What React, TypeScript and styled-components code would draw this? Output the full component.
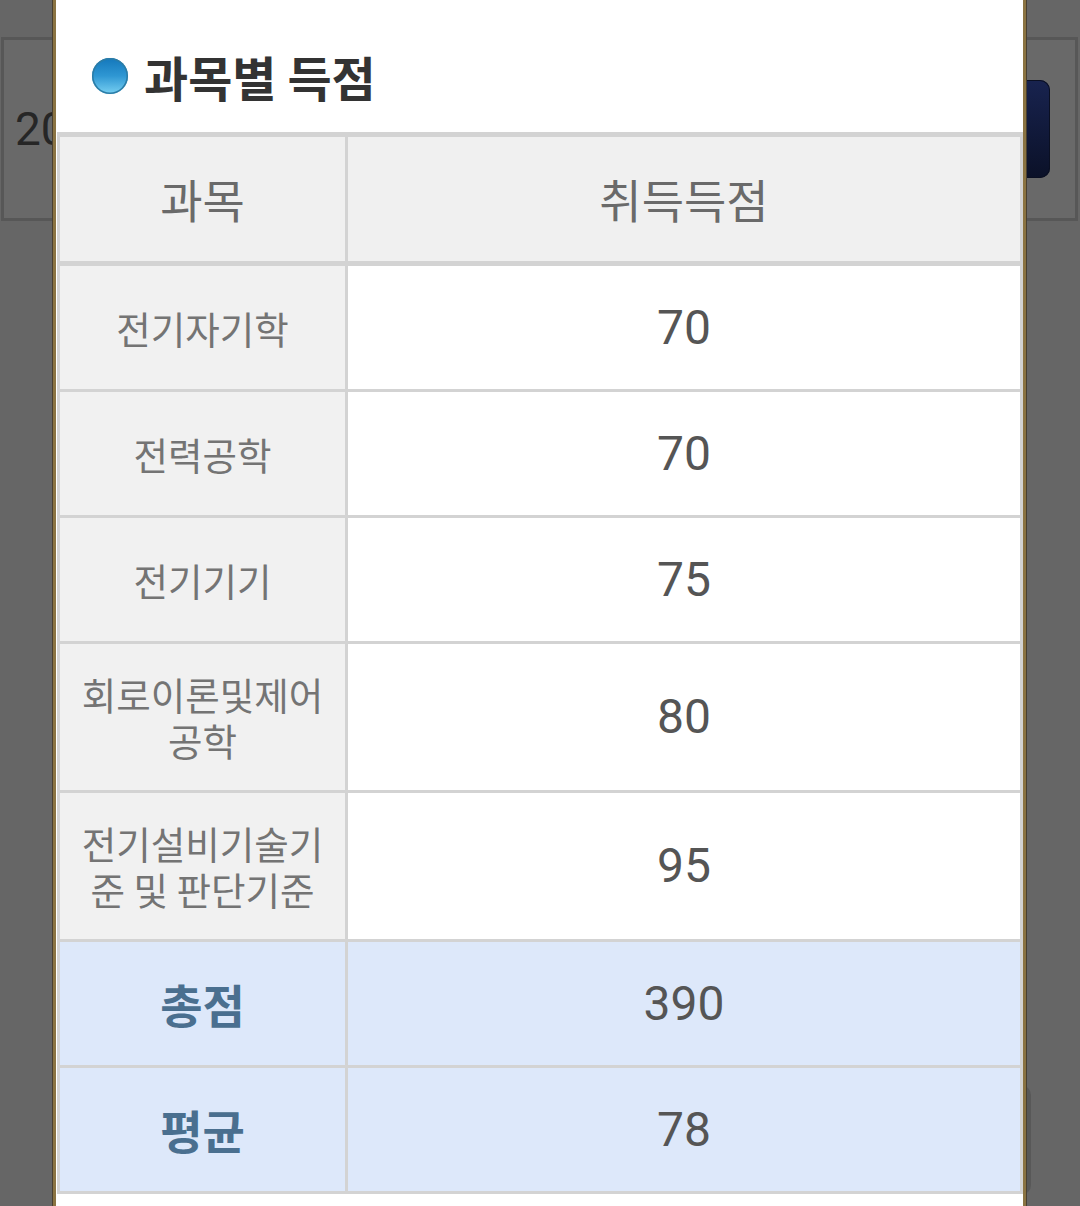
import React from "react";
import styled, { createGlobalStyle } from "styled-components";

const GlobalStyle = createGlobalStyle`
  html, body {
    margin: 0;
    padding: 0;
    background: #666666;
    overflow: hidden;
  }
  body {
    font-family: Roboto, "Noto Sans CJK KR", "Noto Sans", sans-serif;
  }
`;

const Page = styled.div`
  position: relative;
  width: 1080px;
  height: 1206px;
  background: #666666;
  padding-top: 37px;
  box-sizing: border-box;
  overflow: hidden;
`;

const RowBox = styled.div`
  box-sizing: border-box;
  height: 184px;
  margin: 0 2px 0 1px;
  border: 3px solid #575757;
  background: #696969;
  display: flex;
  align-items: center;
  justify-content: space-between;
  padding: 0 0 0 11px;
`;

const YearText = styled.span`
  font-family: Roboto, "Noto Sans CJK KR", sans-serif;
  font-size: 46px;
  color: #262626;
`;

const DarkButton = styled.div`
  width: 120px;
  height: 98px;
  margin-right: 25px;
  border-radius: 10px;
  background: linear-gradient(180deg, #18234f 0%, #0b1128 100%);
  box-shadow: inset 0 0 0 1px #0a0f22;
`;

const LowerArea = styled.div`
  display: flex;
  justify-content: flex-end;
  margin-top: 864px;
  padding-right: 49px;
`;

const GhostButton = styled.div`
  width: 100px;
  height: 110px;
  border-radius: 10px;
  background: #585858;
`;

const Modal = styled.section`
  position: absolute;
  top: -4px;
  left: 53px;
  width: 973px;
  height: 1260px;
  box-sizing: border-box;
  background: #ffffff;
  border-left: 3px solid #8a7342;
  border-right: 3px solid #8a7342;
  box-shadow: -1px 0 0 #4a4030, 1px 0 0 #4a4030;
`;

const TitleBar = styled.header`
  box-sizing: border-box;
  height: 136px;
  padding: 24px 0 0 36px;
  display: flex;
  align-items: center;
  gap: 16px;
`;

const Dot = styled.span`
  width: 36px;
  height: 36px;
  border-radius: 50%;
  background: linear-gradient(180deg, #1477bb 0%, #2f97d3 50%, #78d0f2 100%);
  box-shadow: inset 0 0 0 1.5px #2b7ca6, 0 0 1px rgba(0, 0, 0, 0.15);
  flex: none;
`;

const Title = styled.h2`
  margin: 0;
  font-family: "Noto Sans CJK KR", sans-serif;
  font-size: 48px;
  font-weight: 700;
  color: #333333;
  line-height: 1;
`;

const Grid = styled.div`
  margin-left: 1px;
  display: grid;
  grid-template-columns: 285px 1fr;
  gap: 3px;
  padding: 5px 3px 3px 3px;
  background: #d3d3d3;
`;

type Tone = "head" | "label" | "value" | "sumLabel" | "sumValue";

const bg: Record<Tone, string> = {
  head: "#f0f0f0",
  label: "#f1f1f1",
  value: "#ffffff",
  sumLabel: "#dde8fa",
  sumValue: "#dde8fa",
};

const Cell = styled.div<{ $tone: Tone }>`
  box-sizing: border-box;
  min-height: ${(p) => (p.$tone === "head" ? "124px" : "123px")};
  margin-bottom: ${(p) => (p.$tone === "head" ? "2px" : "0")};
  padding: 27px 8px;
  display: flex;
  align-items: center;
  justify-content: center;
  text-align: center;
  word-break: break-all;
  background: ${(p) => bg[p.$tone]};
  font-family: ${(p) =>
    p.$tone === "value" || p.$tone === "sumValue"
      ? 'Roboto, "Noto Sans CJK KR", sans-serif'
      : '"Noto Sans CJK KR", sans-serif'};
  font-size: ${(p) =>
    p.$tone === "head"
      ? "46px"
      : p.$tone === "label"
      ? "37.5px"
      : p.$tone === "sumLabel"
      ? "46px"
      : "48px"};
  font-weight: ${(p) => (p.$tone === "sumLabel" ? 700 : 400)};
  line-height: ${(p) => (p.$tone === "label" ? "46px" : "1.2")};
  color: ${(p) =>
    p.$tone === "head"
      ? "#6a6a6a"
      : p.$tone === "label"
      ? "#747474"
      : p.$tone === "sumLabel"
      ? "#4a6f8f"
      : "#555555"};
`;

const subjects: { name: string; score: number }[] = [
  { name: "전기자기학", score: 70 },
  { name: "전력공학", score: 70 },
  { name: "전기기기", score: 75 },
  { name: "회로이론및제어공학", score: 80 },
  { name: "전기설비기술기준 및 판단기준", score: 95 },
];

export default function App() {
  const total = subjects.reduce((s, x) => s + x.score, 0);
  const avg = Math.round(total / subjects.length);
  return (
    <>
      <GlobalStyle />
      <Page>
        <RowBox>
          <YearText>20</YearText>
          <DarkButton />
        </RowBox>
        <LowerArea>
          <GhostButton />
        </LowerArea>
        <Modal>
          <TitleBar>
            <Dot />
            <Title>과목별 득점</Title>
          </TitleBar>
          <Grid>
            <Cell $tone="head">과목</Cell>
            <Cell $tone="head">취득득점</Cell>
            {subjects.map((s) => (
              <React.Fragment key={s.name}>
                <Cell $tone="label">{s.name}</Cell>
                <Cell $tone="value">{s.score}</Cell>
              </React.Fragment>
            ))}
            <Cell $tone="sumLabel">총점</Cell>
            <Cell $tone="sumValue">{total}</Cell>
            <Cell $tone="sumLabel">평균</Cell>
            <Cell $tone="sumValue">{avg}</Cell>
          </Grid>
        </Modal>
      </Page>
    </>
  );
}
